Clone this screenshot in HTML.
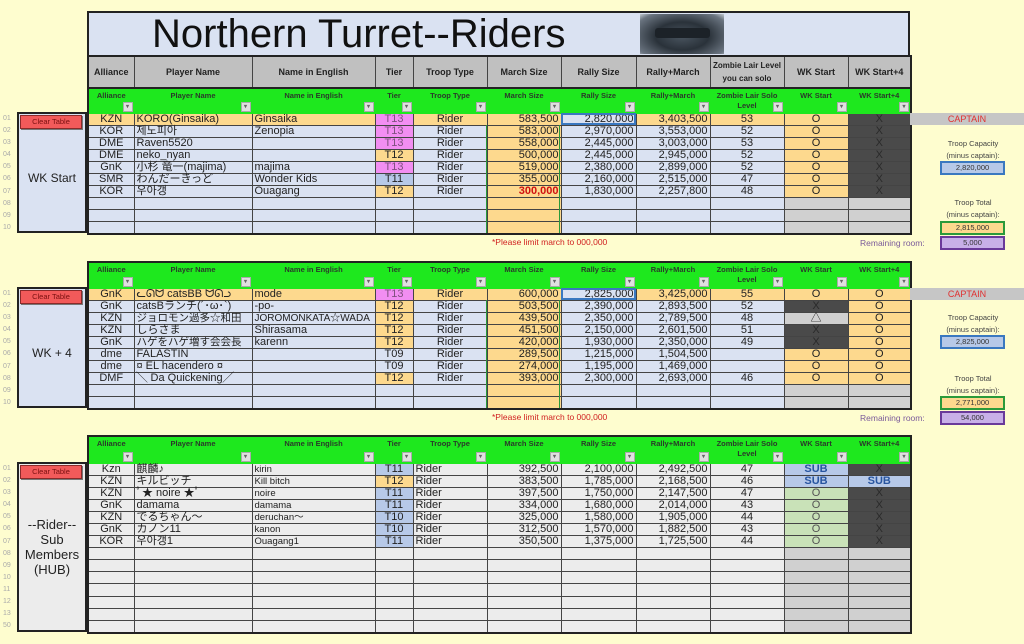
<!DOCTYPE html>
<html><head><meta charset="utf-8">
<style>
body{margin:0;width:1024px;height:644px;background:#fefdcf;position:relative;overflow:hidden;font-family:"Liberation Sans","Noto Sans CJK JP",sans-serif;}
.a{position:absolute}
table.d{position:absolute;left:87px;border-collapse:collapse;table-layout:fixed;width:823px;border:2px solid #222}
table.d tr{height:12.1px}
table.d td{border:1px solid #444;padding:0 2px;font-size:11px;line-height:11px;height:11px;white-space:nowrap;text-align:center;color:#222;background:#dae2f2;vertical-align:middle}
table.s3 td{background:#ececec}
tr.h td{background:#1ee81e;font-size:7.5px;font-weight:bold;color:#2a3a2a;vertical-align:top;line-height:10px;padding-top:2px;position:relative;border-color:#1ee81e}
tr.h td span{position:absolute;right:1px;bottom:1px;width:8px;height:8px;background:#e0e0e0;border:1px solid #aaa;font-size:6px;line-height:8px;color:#666}
table.d td.p{background:#fdd98e}
table.d td.k{background:#f28ef2;color:#805080}
table.d td.t{background:#b7c9e8}
table.d td.x{background:#4a4a4a;color:#2a2a2a}
table.d td.g{background:#d0d0d0}
table.d td.gr{background:#c9e2b8;color:#555}
table.d td.sb{background:#b7c9e8;color:#2855a0;font-weight:bold}
table.d td.r{text-align:right}
table.d td.l{text-align:left}
table.d td.sm{font-size:9.5px}
td.rb{outline:2px solid #3a78c0;outline-offset:-2px}
.o{color:#555}
.rn{position:absolute;left:3px;font-size:7px;color:#aaa;width:12px}
.btn{position:absolute;left:20px;width:60px;height:12px;background:#f25a5a;border:1px solid #8a2a2a;font-size:7.5px;line-height:12px;text-align:center;color:#7a1010;box-shadow:1px 1px 0 #777}
.lp{position:absolute;left:17px;width:66px;border:2px solid #222;background:#dae2f2;text-align:center;font-size:12px;color:#222}
.note{position:absolute;font-size:8.5px;color:#d02020}
.cap{position:absolute;left:910px;width:114px;height:12px;background:#c6c6c6;color:#e03030;font-size:9px;line-height:12px;text-align:center}
.lab{position:absolute;left:930px;width:86px;text-align:center;font-size:7.5px;line-height:12px;color:#444}
.bx{position:absolute;left:940px;width:61px;height:10px;font-size:7.5px;line-height:10px;text-align:center;color:#333}
</style></head><body>

<!-- title -->
<div class="a" style="left:87px;top:11px;width:819px;height:42px;background:#dae2f2;border:2px solid #222;"></div>
<div class="a" style="left:152px;top:10px;font-size:40px;line-height:48px;color:#111;">Northern Turret--Riders</div>
<div class="a" style="left:640px;top:14px;width:84px;height:40px;background:radial-gradient(ellipse at 50% 55%,#4a5560 0%,#2a323a 45%,#6a7480 85%,#c0c8d0 100%);"></div>
<div class="a" style="left:655px;top:28px;width:55px;height:10px;background:#1c2228;border-radius:3px"></div>

<!-- gray header -->
<table class="d" style="top:55px;border-bottom:none">
<colgroup><col style="width:46px"><col style="width:118px"><col style="width:123px"><col style="width:38px"><col style="width:74px"><col style="width:74px"><col style="width:75px"><col style="width:74px"><col style="width:74px"><col style="width:64px"><col style="width:63px"></colgroup>
<tr style="height:32px"><td style="background:#c0c0c0;font-weight:bold;font-size:9px">Alliance</td><td style="background:#c0c0c0;font-weight:bold;font-size:9px">Player Name</td><td style="background:#c0c0c0;font-weight:bold;font-size:9px">Name in English</td><td style="background:#c0c0c0;font-weight:bold;font-size:9px">Tier</td><td style="background:#c0c0c0;font-weight:bold;font-size:9px">Troop Type</td><td style="background:#c0c0c0;font-weight:bold;font-size:9px">March Size</td><td style="background:#c0c0c0;font-weight:bold;font-size:9px">Rally Size</td><td style="background:#c0c0c0;font-weight:bold;font-size:9px">Rally+March</td><td style="background:#c0c0c0;font-weight:bold;font-size:8px;line-height:13px;white-space:normal">Zombie Lair Level you can solo</td><td style="background:#c0c0c0;font-weight:bold;font-size:9px">WK Start</td><td style="background:#c0c0c0;font-weight:bold;font-size:9px">WK Start+4</td></tr>
</table>

<!-- section 1 -->
<table class="d" style="top:87px">
<colgroup><col style="width:46px"><col style="width:118px"><col style="width:123px"><col style="width:38px"><col style="width:74px"><col style="width:74px"><col style="width:75px"><col style="width:74px"><col style="width:74px"><col style="width:64px"><col style="width:63px"></colgroup>
<tr class="h" style="height:25px"><td>Alliance<span>▾</span></td><td>Player Name<span>▾</span></td><td>Name in English<span>▾</span></td><td>Tier<span>▾</span></td><td>Troop Type<span>▾</span></td><td>March Size<span>▾</span></td><td>Rally Size<span>▾</span></td><td>Rally+March<span>▾</span></td><td>Zombie Lair Solo<br>Level<span>▾</span></td><td>WK Start<span>▾</span></td><td>WK Start+4<span>▾</span></td></tr>
<tr><td class="p">KZN</td><td class="p l">KORO(Ginsaika)</td><td class="p l">Ginsaika</td><td class="k">T13</td><td class="p">Rider</td><td class="p r">583,500</td><td class="r rb">2,820,000</td><td class="p r">3,403,500</td><td class="p">53</td><td class="p o">O</td><td class="x">X</td></tr>
<tr><td>KOR</td><td class="l">제노피아</td><td class="l">Zenopia</td><td class="k">T13</td><td>Rider</td><td class="p r">583,000</td><td class="r">2,970,000</td><td class="r">3,553,000</td><td>52</td><td class="p o">O</td><td class="x">X</td></tr>
<tr><td>DME</td><td class="l">Raven5520</td><td></td><td class="k">T13</td><td>Rider</td><td class="p r">558,000</td><td class="r">2,445,000</td><td class="r">3,003,000</td><td>53</td><td class="p o">O</td><td class="x">X</td></tr>
<tr><td>DME</td><td class="l">neko_nyan</td><td></td><td class="p">T12</td><td>Rider</td><td class="p r">500,000</td><td class="r">2,445,000</td><td class="r">2,945,000</td><td>52</td><td class="p o">O</td><td class="x">X</td></tr>
<tr><td>GnK</td><td class="l">小杉 竜一(majima)</td><td class="l">majima</td><td class="k">T13</td><td>Rider</td><td class="p r">519,000</td><td class="r">2,380,000</td><td class="r">2,899,000</td><td>52</td><td class="p o">O</td><td class="x">X</td></tr>
<tr><td>SMR</td><td class="l">わんだーきっど</td><td class="l">Wonder Kids</td><td class="t">T11</td><td>Rider</td><td class="p r">355,000</td><td class="r">2,160,000</td><td class="r">2,515,000</td><td>47</td><td class="p o">O</td><td class="x">X</td></tr>
<tr><td>KOR</td><td class="l">우아갱</td><td class="l">Ouagang</td><td class="p">T12</td><td>Rider</td><td class="p r" style="color:#d01010;font-weight:bold">300,000</td><td class="r">1,830,000</td><td class="r">2,257,800</td><td>48</td><td class="p o">O</td><td class="x">X</td></tr>
<tr><td></td><td></td><td></td><td></td><td></td><td class="p"></td><td></td><td></td><td></td><td class="g"></td><td class="g"></td></tr>
<tr><td></td><td></td><td></td><td></td><td></td><td class="p"></td><td></td><td></td><td></td><td class="g"></td><td class="g"></td></tr>
<tr><td></td><td></td><td></td><td></td><td></td><td class="p"></td><td></td><td></td><td></td><td class="g"></td><td class="g"></td></tr>
</table>
<div class="a" style="left:486px;top:125px;width:1px;height:108px;background:#2a9a3a"></div>
<div class="a" style="left:559px;top:125px;width:1px;height:108px;background:#2a9a3a"></div>
<div class="lp" style="top:112px;height:117px;"><div style="margin-top:57px">WK Start</div></div>
<div class="btn" style="top:115px">Clear Table</div>
<div class="rn" style="top:115px">01</div><div class="rn" style="top:127px">02</div><div class="rn" style="top:139px">03</div><div class="rn" style="top:151px">04</div><div class="rn" style="top:163px">05</div><div class="rn" style="top:175px">06</div><div class="rn" style="top:188px">07</div><div class="rn" style="top:200px">08</div><div class="rn" style="top:212px">09</div><div class="rn" style="top:224px">10</div>
<div class="note" style="left:492px;top:237px">*Please limit march to 000,000</div>
<div class="cap" style="top:113px">CAPTAIN</div>
<div class="lab" style="top:138px">Troop Capacity<br>(minus captain):</div>
<div class="bx" style="top:161px;background:#b7c9e8;border:2px solid #3a78c0">2,820,000</div>
<div class="lab" style="top:197px">Troop Total<br>(minus captain):</div>
<div class="bx" style="top:221px;background:#fdd98e;border:2px solid #2a9a3a">2,815,000</div>
<div class="a" style="left:860px;top:238px;font-size:8.5px;color:#7a5a9a">Remaining room:</div>
<div class="bx" style="top:236px;background:#c8b0e8;border:2px solid #6a3a9a">5,000</div>

<!-- section 2 -->
<table class="d" style="top:261px">
<colgroup><col style="width:46px"><col style="width:118px"><col style="width:123px"><col style="width:38px"><col style="width:74px"><col style="width:74px"><col style="width:75px"><col style="width:74px"><col style="width:74px"><col style="width:64px"><col style="width:63px"></colgroup>
<tr class="h" style="height:26px"><td>Alliance<span>▾</span></td><td>Player Name<span>▾</span></td><td>Name in English<span>▾</span></td><td>Tier<span>▾</span></td><td>Troop Type<span>▾</span></td><td>March Size<span>▾</span></td><td>Rally Size<span>▾</span></td><td>Rally+March<span>▾</span></td><td>Zombie Lair Solo<br>Level<span>▾</span></td><td>WK Start<span>▾</span></td><td>WK Start+4<span>▾</span></td></tr>
<tr><td class="p">GnK</td><td class="p l">ᓚᘏᗢ catsBB ᗢᘏᓗ</td><td class="p l">mode</td><td class="k">T13</td><td class="p">Rider</td><td class="p r">600,000</td><td class="r rb">2,825,000</td><td class="p r">3,425,000</td><td class="p">55</td><td class="p o">O</td><td class="p o">O</td></tr>
<tr><td>GnK</td><td class="l">catsBランチ(´･ω･`)</td><td class="l">-po-</td><td class="p">T12</td><td>Rider</td><td class="p r">503,500</td><td class="r">2,390,000</td><td class="r">2,893,500</td><td>52</td><td class="x">X</td><td class="p o">O</td></tr>
<tr><td>KZN</td><td class="l" style="overflow:hidden;font-size:10.5px">ジョロモン過多☆和田</td><td class="l" style="font-size:10px;overflow:hidden">JOROMONKATA☆WADA</td><td class="p">T12</td><td>Rider</td><td class="p r">439,500</td><td class="r">2,350,000</td><td class="r">2,789,500</td><td>48</td><td class="g o">△</td><td class="p o">O</td></tr>
<tr><td>KZN</td><td class="l">しらさま</td><td class="l">Shirasama</td><td class="p">T12</td><td>Rider</td><td class="p r">451,500</td><td class="r">2,150,000</td><td class="r">2,601,500</td><td>51</td><td class="x">X</td><td class="p o">O</td></tr>
<tr><td>GnK</td><td class="l" style="overflow:hidden;font-size:10.5px">ハゲをハゲ増す会会長</td><td class="l">karenn</td><td class="p">T12</td><td>Rider</td><td class="p r">420,000</td><td class="r">1,930,000</td><td class="r">2,350,000</td><td>49</td><td class="x">X</td><td class="p o">O</td></tr>
<tr><td>dme</td><td class="l">FALASTIN</td><td></td><td>T09</td><td>Rider</td><td class="p r">289,500</td><td class="r">1,215,000</td><td class="r">1,504,500</td><td></td><td class="p o">O</td><td class="p o">O</td></tr>
<tr><td>dme</td><td class="l">¤ EL hacendero ¤</td><td></td><td>T09</td><td>Rider</td><td class="p r">274,000</td><td class="r">1,195,000</td><td class="r">1,469,000</td><td></td><td class="p o">O</td><td class="p o">O</td></tr>
<tr><td>DMF</td><td class="l">╲ Da Quickeɴing╱</td><td></td><td class="p">T12</td><td>Rider</td><td class="p r">393,000</td><td class="r">2,300,000</td><td class="r">2,693,000</td><td>46</td><td class="p o">O</td><td class="p o">O</td></tr>
<tr><td></td><td></td><td></td><td></td><td></td><td class="p"></td><td></td><td></td><td></td><td class="g"></td><td class="g"></td></tr>
<tr><td></td><td></td><td></td><td></td><td></td><td class="p"></td><td></td><td></td><td></td><td class="g"></td><td class="g"></td></tr>
</table>
<div class="a" style="left:486px;top:300px;width:1px;height:108px;background:#2a9a3a"></div>
<div class="a" style="left:559px;top:300px;width:1px;height:108px;background:#2a9a3a"></div>
<div class="lp" style="top:287px;height:117px;"><div style="margin-top:57px">WK + 4</div></div>
<div class="btn" style="top:290px">Clear Table</div>
<div class="rn" style="top:290px">01</div><div class="rn" style="top:302px">02</div><div class="rn" style="top:314px">03</div><div class="rn" style="top:326px">04</div><div class="rn" style="top:338px">05</div><div class="rn" style="top:350px">06</div><div class="rn" style="top:363px">07</div><div class="rn" style="top:375px">08</div><div class="rn" style="top:387px">09</div><div class="rn" style="top:399px">10</div>
<div class="note" style="left:492px;top:412px">*Please limit march to 000,000</div>
<div class="cap" style="top:288px">CAPTAIN</div>
<div class="lab" style="top:312px">Troop Capacity<br>(minus captain):</div>
<div class="bx" style="top:335px;background:#b7c9e8;border:2px solid #3a78c0">2,825,000</div>
<div class="lab" style="top:373px">Troop Total<br>(minus captain):</div>
<div class="bx" style="top:396px;background:#fdd98e;border:2px solid #2a9a3a">2,771,000</div>
<div class="a" style="left:860px;top:413px;font-size:8.5px;color:#7a5a9a">Remaining room:</div>
<div class="bx" style="top:411px;background:#c8b0e8;border:2px solid #6a3a9a">54,000</div>

<!-- section 3 -->
<table class="d s3" style="top:435px">
<colgroup><col style="width:46px"><col style="width:118px"><col style="width:123px"><col style="width:38px"><col style="width:74px"><col style="width:74px"><col style="width:75px"><col style="width:74px"><col style="width:74px"><col style="width:64px"><col style="width:63px"></colgroup>
<tr class="h" style="height:27px"><td>Alliance<span>▾</span></td><td>Player Name<span>▾</span></td><td>Name in English<span>▾</span></td><td>Tier<span>▾</span></td><td>Troop Type<span>▾</span></td><td>March Size<span>▾</span></td><td>Rally Size<span>▾</span></td><td>Rally+March<span>▾</span></td><td>Zombie Lair Solo<br>Level<span>▾</span></td><td>WK Start<span>▾</span></td><td>WK Start+4<span>▾</span></td></tr>
<tr><td>Kzn</td><td class="l">麒麟♪</td><td class="l sm">kirin</td><td class="t">T11</td><td class="l">Rider</td><td class="r">392,500</td><td class="r">2,100,000</td><td class="r">2,492,500</td><td>47</td><td class="sb">SUB</td><td class="x">X</td></tr>
<tr><td>KZN</td><td class="l">キルビッチ</td><td class="l sm">Kill bitch</td><td class="p">T12</td><td class="l">Rider</td><td class="r">383,500</td><td class="r">1,785,000</td><td class="r">2,168,500</td><td>46</td><td class="sb">SUB</td><td class="sb">SUB</td></tr>
<tr><td>KZN</td><td class="l">ﾟ★ noire ★ﾟ</td><td class="l sm">noire</td><td class="t">T11</td><td class="l">Rider</td><td class="r">397,500</td><td class="r">1,750,000</td><td class="r">2,147,500</td><td>47</td><td class="gr">O</td><td class="x">X</td></tr>
<tr><td>GnK</td><td class="l">damama</td><td class="l sm">damama</td><td class="t">T11</td><td class="l">Rider</td><td class="r">334,000</td><td class="r">1,680,000</td><td class="r">2,014,000</td><td>43</td><td class="gr">O</td><td class="x">X</td></tr>
<tr><td>KZN</td><td class="l">でるちゃん〜</td><td class="l sm">deruchan〜</td><td class="t">T10</td><td class="l">Rider</td><td class="r">325,000</td><td class="r">1,580,000</td><td class="r">1,905,000</td><td>44</td><td class="gr">O</td><td class="x">X</td></tr>
<tr><td>GnK</td><td class="l">カノン11</td><td class="l sm">kanon</td><td class="t">T10</td><td class="l">Rider</td><td class="r">312,500</td><td class="r">1,570,000</td><td class="r">1,882,500</td><td>43</td><td class="gr">O</td><td class="x">X</td></tr>
<tr><td>KOR</td><td class="l">우아갱1</td><td class="l sm">Ouagang1</td><td class="t">T11</td><td class="l">Rider</td><td class="r">350,500</td><td class="r">1,375,000</td><td class="r">1,725,500</td><td>44</td><td class="gr">O</td><td class="x">X</td></tr>
<tr><td></td><td></td><td></td><td></td><td></td><td></td><td></td><td></td><td></td><td class="g"></td><td class="g"></td></tr>
<tr><td></td><td></td><td></td><td></td><td></td><td></td><td></td><td></td><td></td><td class="g"></td><td class="g"></td></tr>
<tr><td></td><td></td><td></td><td></td><td></td><td></td><td></td><td></td><td></td><td class="g"></td><td class="g"></td></tr>
<tr><td></td><td></td><td></td><td></td><td></td><td></td><td></td><td></td><td></td><td class="g"></td><td class="g"></td></tr>
<tr><td></td><td></td><td></td><td></td><td></td><td></td><td></td><td></td><td></td><td class="g"></td><td class="g"></td></tr>
<tr><td></td><td></td><td></td><td></td><td></td><td></td><td></td><td></td><td></td><td class="g"></td><td class="g"></td></tr>
<tr><td></td><td></td><td></td><td></td><td></td><td></td><td></td><td></td><td></td><td class="g"></td><td class="g"></td></tr>
</table>
<div class="lp" style="top:462px;height:166px;background:#ececec;font-size:13px;line-height:15px"><div style="margin-top:53px">--Rider--<br>Sub<br>Members<br>(HUB)</div></div>
<div class="btn" style="top:465px">Clear Table</div>
<div class="rn" style="top:465px">01</div><div class="rn" style="top:477px">02</div><div class="rn" style="top:489px">03</div><div class="rn" style="top:501px">04</div><div class="rn" style="top:513px">05</div><div class="rn" style="top:525px">06</div><div class="rn" style="top:538px">07</div><div class="rn" style="top:550px">08</div><div class="rn" style="top:562px">09</div><div class="rn" style="top:574px">10</div><div class="rn" style="top:586px">11</div><div class="rn" style="top:598px">12</div><div class="rn" style="top:610px">13</div><div class="rn" style="top:622px">50</div>

</body></html>
